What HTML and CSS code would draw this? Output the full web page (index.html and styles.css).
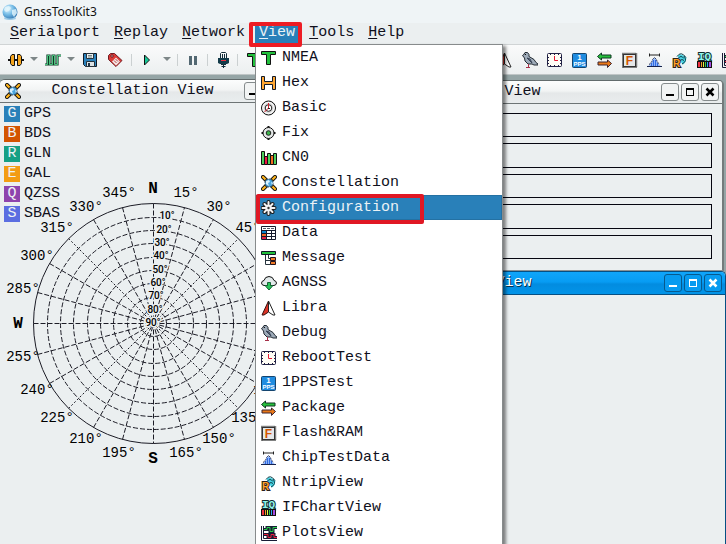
FILE: index.html
```html
<!DOCTYPE html>
<html lang="en">
<head>
<meta charset="utf-8">
<title>GnssToolKit3</title>
<link rel="stylesheet" href="styles.css">
</head>
<body>
<svg class="sprite" aria-hidden="true">
  <defs>
    <radialGradient id="globe-fill" cx=".35" cy=".3" r=".8"><stop offset="0" stop-color="#e9f8ff"/><stop offset=".45" stop-color="#79bfe8"/><stop offset="1" stop-color="#2469a8"/></radialGradient>
  </defs>
  <symbol id="i-nmea" viewBox="0 0 16 16"><path d="M.5 1.5h14v3h-5v10h-4v-10h-5z" fill="#22c03c" stroke="#111"/></symbol>
  <symbol id="i-hex" viewBox="0 0 16 16"><path d="M.5 1.5h3v5h8v-5h3v13h-3v-5h-8v5h-3z" fill="#ffa733" stroke="#111827"/></symbol>
  <symbol id="i-basic" viewBox="0 0 16 16"><circle cx="7.5" cy="8" r="7" fill="#ddd" stroke="#111"/><circle cx="7.5" cy="8" r="5.6" fill="none" stroke="#fff"/><circle cx="7.5" cy="8" r="3.3" fill="#fff" stroke="#222"/><path d="M7.5 3v5l-4 4" fill="none" stroke="#d3202f"/><path d="M7 8h2v1H7z" fill="#222"/></symbol>
  <symbol id="i-fix" viewBox="0 0 16 16"><path d="M7.5 1v14M.5 8h14" stroke="#111" stroke-width="2"/><circle cx="7.5" cy="8" r="5.5" fill="#e5e8e8" stroke="#111"/><circle cx="7.5" cy="8" r="2.3" fill="#3fb64c" stroke="#222"/></symbol>
  <symbol id="i-cn0" viewBox="0 0 16 16"><g stroke="#111"><path d="M.5 1.5h3v13h-3z" fill="#4ccf5c"/><path d="M3.5 6.5h3v8h-3z" fill="#ec1745"/><path d="M6.5 3.5h3v11h-3z" fill="#4ccf5c"/><path d="M9.500 5.500h3v9h-3z" fill="#f36a21"/><path d="M12.500 3.500h3v11h-3z" fill="#4ccf5c"/></g></symbol>
  <symbol id="i-const" viewBox="0 0 16 16"><path d="M2 2l12 12M14 2L2 14" stroke="#111" stroke-width="4" stroke-linecap="round"/><path d="M2 2l12 12M14 2L2 14" stroke="#ffb51c" stroke-width="2.200" stroke-linecap="round"/><path d="M4.500 4.500l7 7M11.500 4.500l-7 7" stroke="#111" stroke-width="2"/><circle cx="8" cy="8" r="4" fill="#48a4df" stroke="#3a4a55" stroke-dasharray="2 1"/><path d="M5 6l3-1 1 2-2 1 1 3-3-2zM10 7l2 1-1 2z" fill="#d8f1ff"/></symbol>
  <symbol id="i-config" viewBox="0 0 16 16"><path d="M7.500 2v12M1.500 8h12M3.500 4l8 8M11.500 4l-8 8" stroke="#1b1b1b" stroke-width="4" stroke-linecap="round"/><circle cx="7.500" cy="8" r="4.500" fill="#1b1b1b"/><path d="M7.500 2v12M1.500 8h12M3.500 4l8 8M11.500 4l-8 8" stroke="#f2f2f2" stroke-width="2" stroke-linecap="round"/><circle cx="7.500" cy="8" r="3.200" fill="#f2f2f2"/><circle cx="7.500" cy="8" r="1.200" fill="#333"/></symbol>
  <symbol id="i-data" viewBox="0 0 16 16"><path d="M.5 1.500h14v13H.5z" fill="#fff" stroke="#151a2c"/><path d="M1 6h4v2H1z" fill="#0788cf"/><path d="M1 9h4v2H1z" fill="#f26a21"/><path d="M1 12h4v2H1z" fill="#e31b43"/><path d="M1 5.500h13M1 8.500h13M1 11.500h13M5.500 5v10M10.500 5v10" stroke="#151a2c" fill="none"/><path d="M2 3.500h11" stroke="#555b68" stroke-dasharray="3 1"/></symbol>
  <symbol id="i-message" viewBox="0 0 16 16"><path d="M.5 1.500h14v3H.5z" fill="#22c03c" stroke="#111827"/><path d="M4.500 5v9.500h5M4.500 10.500h5M7.500 5v3.500h2" fill="none" stroke="#26333c"/><path d="M9.500 7.500h5v3h-5zM9.500 11.500h5v3h-5z" fill="#f07a25" stroke="#26131c"/></symbol>
  <symbol id="i-agnss" viewBox="0 0 16 16"><path d="M3 10.500Q.5 10 .5 8 1 5.500 3 5.500 4 1.500 8 1.500t5 4q2 0 2.500 2.500 0 2-2.500 2.500z" fill="#e2e9ea" stroke="#111"/><path d="M6.500 7.500h3v3h2.500l-4 4.500-4-4.500h2.500z" fill="#26c558" stroke="#176236"/></symbol>
  <symbol id="i-libra" viewBox="0 0 16 16"><path d="M7.500 1l-6.500 14h2l4.500-3z" fill="#db3226" stroke="#35100e"/><path d="M7.500 1l6.500 14h-2l-4.500-3z" fill="#fff" stroke="#222"/></symbol>
  <symbol id="i-debug" viewBox="0 0 16 16"><path d="M3 .5h2.500l1.500 2v2l5 3 2 3 2 1.500v1h-4l-2-1H6l-3-3-.5-3L.5 3.500l1-.5z" fill="#9eabb9" stroke="#222a32"/><path d="M5 6l5 5-2-4z" fill="#62718a" stroke="#394456"/><path d="M3 2h1v1H3z" fill="#111"/><path d="M6.500 12v3M4 15.500h4" stroke="#a63049"/></symbol>
  <symbol id="i-reboot" viewBox="0 0 16 16"><rect x=".5" y="1.500" width="14" height="13" rx="1" fill="#fffdf5" stroke="#202044"/><path d="M7.500 2v1M3.500 2v1M11.500 2v1M3.500 13v1M7.500 13v1M11.500 13v1M1 5.500h1M1 8.500h1M1 11.500h1M13 5.500h1M13 8.500h1M13 11.500h1" stroke="#202044"/><path d="M7.500 4v4.500H11" fill="none" stroke="#e31834"/></symbol>
  <symbol id="i-pps" viewBox="0 0 16 16"><rect x=".5" y="1.500" width="14" height="14" rx="1" fill="#208ce0" stroke="#15456f"/><text x="7.500" y="8" class="tiny-one">1</text><text x="7.500" y="14" class="tiny-pps">PPS</text></symbol>
  <symbol id="i-package" viewBox="0 0 16 16"><path d="M.5 4.500l4-3.500v2h9.500v3H4.500v2z" fill="#26c03c" stroke="#103824"/><path d="M14.500 11.500l-4-3.500v2H1v3h9.500v2.500z" fill="#e97817" stroke="#3d2430"/></symbol>
  <symbol id="i-flash" viewBox="0 0 16 16"><rect x=".5" y="1.500" width="14" height="14" fill="#e4e7e8" stroke="#111" stroke-width="1.500" stroke-dasharray="1 1"/><rect x="1.500" y="2.500" width="12" height="12" fill="#e4e7e8" stroke="#333"/><text x="7.500" y="13" class="tiny-f">F</text></symbol>
  <symbol id="i-chip" viewBox="0 0 16 16"><path d="M2.500 1.500v3M12.500 1.500v3M2.500 3h10" stroke="#222" fill="none"/><path d="M1 14q3-1 4.500-6l2-2 2 2q1.500 5 4.500 6z" fill="#8eb5fa"/><path d="M4.500 11v3M6.500 8v6M8.500 8v6M10.500 11v3" stroke="#326be1"/><path d="M0 14.500h15" stroke="#16224c"/><path d="M2 12.500q3-2 3.500-5l2-2 2 2q.5 3 3.500 5" fill="none" stroke="#16224c" stroke-dasharray="2 1"/></symbol>
  <symbol id="i-ntrip" viewBox="0 0 16 16"><path d="M5.500 4q3-4 9 2-1 6-4 6.500z" fill="#48d4e4"/><path d="M5 4.500q4-6 9 1M6 6.500q3-4 6 0M8 8.500q2-2 4 0M12 4q4 5-2 8" fill="none" stroke="#10434d"/><text x="4.500" y="15" class="tiny-r">R</text></symbol>
  <symbol id="i-if" viewBox="0 0 16 16"><text x="7.500" y="7.500" class="tiny-iq">IQ</text><path d="M0 9h15v7H0z" fill="#111"/><path d="M1 10h2v5H1z" fill="#ef3140"/><path d="M4 10h1v5H4z" fill="#f79a25"/><path d="M6 10h1v5H6z" fill="#e8f13c"/><path d="M8 10h1v5H8z" fill="#2ecb4d"/><path d="M10 10h1v5h-1z" fill="#29a7f3"/><path d="M12 10h2v5h-2z" fill="#a44be0"/></symbol>
  <symbol id="i-plots" viewBox="0 0 16 16"><path d="M.5 1v14.500H16" fill="none" stroke="#171c35"/><path d="M2.500 1v12.500H16" fill="none" stroke="#171c35"/><path d="M3 4.500h3v-2h3v4h3v-4h4" fill="none" stroke="#171c35" stroke-width="3"/><path d="M3 4.500h3v-2h3v4h3v-4h4" fill="none" stroke="#29ce4a"/><path d="M3 9.500h4v3h3v-3h3v3h3" fill="none" stroke="#171c35" stroke-width="3"/><path d="M3 9.500h4v3h3v-3h3v3h3" fill="none" stroke="#ed1f3c"/></symbol>
  <symbol id="i-connect" viewBox="0 0 16 16"><path d="M0 8h16" stroke="#111" stroke-width="2"/><path d="M6.500 2.500H4l-1.500 2v7l1.500 2h2.500zM9.500 2.500H12l1.500 2v7l-1.500 2H9.500z" fill="#f5a51d" stroke="#111"/></symbol>
  <symbol id="i-wave" viewBox="0 0 16 16"><path d="M0 12.500h2.500V3.500h2v9h3V3.500h2v9h3V3.500H16" fill="none" stroke="#0b3b25" stroke-width="2.200"/><path d="M0 12.500h2.500V3.500h2v9h3V3.500h2v9h3V3.500H16" fill="none" stroke="#4cc480"/></symbol>
  <symbol id="i-save" viewBox="0 0 16 16"><path d="M1.500 1.500h13v13h-11l-2-2z" fill="#2a82bd" stroke="#111a26"/><path d="M4.500 1.500h7v5h-7z" fill="#edf1f2" stroke="#26333c"/><path d="M6 3.500h4M6 5h4" stroke="#788"/><path d="M4.500 9.500h8v5h-8z" fill="#dce3e6" stroke="#26333c"/><path d="M6 11h2v3H6z" fill="#234"/></symbol>
  <symbol id="i-tag" viewBox="0 0 16 16"><path d="M1.500 3.500l2-2h4l7.500 7-6 6-7.500-7z" fill="#db3a36" stroke="#701c23"/><path d="M4 3h2v2H4z" fill="#fff" stroke="#701c23"/><path d="M9 5.500l4 4-4 4-4-4z" fill="#f4e9e7"/><path d="M8.500 7l2.500 2.500M7 8.500l2.500 2.500" stroke="#b74146"/></symbol>
  <symbol id="i-play" viewBox="0 0 16 16"><path d="M3.500 3l5 5-5 5z" fill="#17c796" stroke="#111"/></symbol>
  <symbol id="i-pause" viewBox="0 0 16 16"><path d="M4 4h3v9H4zM9 4h3v9H9z" fill="#536872"/></symbol>
  <symbol id="i-plug" viewBox="0 0 16 16"><path d="M5.500 6V1.500l1-1h4l1 1V6M7.500 2v4M9.500 2v4" fill="none" stroke="#122b38"/><path d="M3 6h11v5l-2 1H5l-2-1z" fill="#123a49"/><path d="M6 8.500h5" stroke="#ed3040"/><path d="M6 12.500h5M8.500 12v4M6.500 14.500h4" stroke="#122b38"/></symbol>
  <symbol id="i-caret" viewBox="0 0 8 5"><path d="M0 0h8L4 4z" fill="#7e8788"/></symbol>
  <symbol id="i-min" viewBox="0 0 10 10"><path d="M1 7h8v2H1z" fill="currentColor"/></symbol>
  <symbol id="i-max" viewBox="0 0 10 10"><path d="M1 1h8v8H1zM2 3v5h6V3z" fill="currentColor" fill-rule="evenodd"/></symbol>
  <symbol id="i-close" viewBox="0 0 10 10"><path d="M1.500 1.500l7 7M8.500 1.500l-7 7" stroke="currentColor" stroke-width="2.500"/></symbol>
</svg>

<div class="app">
  <header class="titlebar">
    <svg class="icon" viewBox="0 0 16 16"><circle cx="8" cy="8" r="7.500" fill="url(#globe-fill)"/><path d="M3 3l4-1 2 2-2 3-3 1-2-2zM10 6l4-1 1 4-3 4-2-3z" fill="#e4f6fd" opacity=".8"/><path d="M3 13q5 3 10 0l1 2q-6 2-12 0z" fill="#9dcbe7"/></svg>
    <span>GnssToolKit3</span>
  </header>

  <nav class="menubar">
    <button class="menu-title"><u>S</u>erialport</button>
    <button class="menu-title"><u>R</u>eplay</button>
    <button class="menu-title"><u>N</u>etwork</button>
    <div class="menu-host">
      <button class="menu-title active"><u>V</u>iew</button>
      <div class="popup">
        <button class="entry"><svg class="icon"><use href="#i-nmea"/></svg>NMEA</button>
        <button class="entry"><svg class="icon"><use href="#i-hex"/></svg>Hex</button>
        <button class="entry"><svg class="icon"><use href="#i-basic"/></svg>Basic</button>
        <button class="entry"><svg class="icon"><use href="#i-fix"/></svg>Fix</button>
        <button class="entry"><svg class="icon"><use href="#i-cn0"/></svg>CN0</button>
        <button class="entry"><svg class="icon"><use href="#i-const"/></svg>Constellation</button>
        <button class="entry selected"><svg class="icon"><use href="#i-config"/></svg>Configuration<span class="mark mark-entry"></span></button>
        <button class="entry"><svg class="icon"><use href="#i-data"/></svg>Data</button>
        <button class="entry"><svg class="icon"><use href="#i-message"/></svg>Message</button>
        <button class="entry"><svg class="icon"><use href="#i-agnss"/></svg>AGNSS</button>
        <button class="entry"><svg class="icon"><use href="#i-libra"/></svg>Libra</button>
        <button class="entry"><svg class="icon"><use href="#i-debug"/></svg>Debug</button>
        <button class="entry"><svg class="icon"><use href="#i-reboot"/></svg>RebootTest</button>
        <button class="entry"><svg class="icon"><use href="#i-pps"/></svg>1PPSTest</button>
        <button class="entry"><svg class="icon"><use href="#i-package"/></svg>Package</button>
        <button class="entry"><svg class="icon"><use href="#i-flash"/></svg>Flash&amp;RAM</button>
        <button class="entry"><svg class="icon"><use href="#i-chip"/></svg>ChipTestData</button>
        <button class="entry"><svg class="icon"><use href="#i-ntrip"/></svg>NtripView</button>
        <button class="entry"><svg class="icon"><use href="#i-if"/></svg>IFChartView</button>
        <button class="entry"><svg class="icon"><use href="#i-plots"/></svg>PlotsView</button>
      </div>
      <span class="mark mark-title"></span>
    </div>
    <button class="menu-title"><u>T</u>ools</button>
    <button class="menu-title"><u>H</u>elp</button>
  </nav>

  <div class="toolbar">
    <button class="tool" aria-label="Connect"><svg class="icon"><use href="#i-connect"/></svg></button>
    <button class="drop" aria-label="Connect options"><svg class="caret"><use href="#i-caret"/></svg></button>
    <button class="tool" aria-label="Baud rate"><svg class="icon"><use href="#i-wave"/></svg></button>
    <button class="drop" aria-label="Baud rate options"><svg class="caret"><use href="#i-caret"/></svg></button>
    <button class="tool" aria-label="Save"><svg class="icon"><use href="#i-save"/></svg></button>
    <button class="tool" aria-label="Clear"><svg class="icon"><use href="#i-tag"/></svg></button>
    <span class="sep"></span>
    <button class="tool" aria-label="Play"><svg class="icon"><use href="#i-play"/></svg></button>
    <button class="drop" aria-label="Play options"><svg class="caret"><use href="#i-caret"/></svg></button>
    <span class="sep"></span>
    <button class="tool narrow" aria-label="Pause"><svg class="icon"><use href="#i-pause"/></svg></button>
    <span class="sep"></span>
    <button class="tool narrow" aria-label="Network"><svg class="icon"><use href="#i-plug"/></svg></button>
    <span class="sep"></span>
    <button class="tool" aria-label="NMEA"><svg class="icon"><use href="#i-nmea"/></svg></button>
    <button class="tool" aria-label="Hex"><svg class="icon"><use href="#i-hex"/></svg></button>
    <button class="tool" aria-label="Basic"><svg class="icon"><use href="#i-basic"/></svg></button>
    <button class="tool" aria-label="Fix"><svg class="icon"><use href="#i-fix"/></svg></button>
    <button class="tool" aria-label="CN0"><svg class="icon"><use href="#i-cn0"/></svg></button>
    <button class="tool" aria-label="Constellation"><svg class="icon"><use href="#i-const"/></svg></button>
    <button class="tool" aria-label="Configuration"><svg class="icon"><use href="#i-config"/></svg></button>
    <button class="tool" aria-label="Data"><svg class="icon"><use href="#i-data"/></svg></button>
    <button class="tool" aria-label="Message"><svg class="icon"><use href="#i-message"/></svg></button>
    <button class="tool" aria-label="AGNSS"><svg class="icon"><use href="#i-agnss"/></svg></button>
    <button class="tool" aria-label="Libra"><svg class="icon"><use href="#i-libra"/></svg></button>
    <button class="tool" aria-label="Debug"><svg class="icon"><use href="#i-debug"/></svg></button>
    <button class="tool" aria-label="RebootTest"><svg class="icon"><use href="#i-reboot"/></svg></button>
    <button class="tool" aria-label="1PPSTest"><svg class="icon"><use href="#i-pps"/></svg></button>
    <button class="tool" aria-label="Package"><svg class="icon"><use href="#i-package"/></svg></button>
    <button class="tool" aria-label="Flash and RAM"><svg class="icon"><use href="#i-flash"/></svg></button>
    <button class="tool" aria-label="ChipTestData"><svg class="icon"><use href="#i-chip"/></svg></button>
    <button class="tool" aria-label="NtripView"><svg class="icon"><use href="#i-ntrip"/></svg></button>
    <button class="tool" aria-label="IFChartView"><svg class="icon"><use href="#i-if"/></svg></button>
    <button class="tool" aria-label="PlotsView"><svg class="icon"><use href="#i-plots"/></svg></button>
  </div>

  <main class="workspace">
    <section class="window sky">
      <div class="caption">
        <svg class="icon"><use href="#i-const"/></svg>
        <h2>Constellation View</h2>
        <button class="ctl" aria-label="Minimize"><svg><use href="#i-min"/></svg></button>
        <button class="ctl" aria-label="Maximize"><svg><use href="#i-max"/></svg></button>
        <button class="ctl" aria-label="Close"><svg><use href="#i-close"/></svg></button>
      </div>
      <div class="sky-body">
        <ul class="legend">
          <li><span class="chip gps">G</span>GPS</li>
          <li><span class="chip bds">B</span>BDS</li>
          <li><span class="chip gln">R</span>GLN</li>
          <li><span class="chip gal">E</span>GAL</li>
          <li><span class="chip qzss">Q</span>QZSS</li>
          <li><span class="chip sbas">S</span>SBAS</li>
        </ul>
        <svg class="plot" viewBox="0 175 306 295">
          <g transform="translate(.5 .5)">
            <g class="spokes">
              <path d="M153 203v240M33 323h240"/>
              <path d="M122 207l62 232M93 219l120 208M49 263l208 120M37 292l232 62M37 354l232-62M49 383l208-120M93 427l120-208M122 439l62-232"/>
              <path class="dots" d="M68 238l170 170M68 408l170-170"/>
            </g>
            <circle class="rim" cx="153" cy="323" r="120"/>
            <g class="rings">
              <circle cx="153" cy="323" r="106"/><circle cx="153" cy="323" r="93"/><circle cx="153" cy="323" r="80"/><circle cx="153" cy="323" r="66"/><circle cx="153" cy="323" r="53"/><circle cx="153" cy="323" r="40"/><circle cx="153" cy="323" r="26"/><circle cx="153" cy="323" r="13"/>
            </g>
          </g>
          <g class="azimuth">
            <text x="186" y="197">15°</text><text x="219" y="211">30°</text><text x="248" y="232">45°</text><text x="270" y="260">60°</text><text x="284" y="292">75°</text>
            <text x="284" y="361">105°</text><text x="270" y="394">120°</text><text x="248" y="422">135°</text><text x="219" y="443">150°</text><text x="186" y="457">165°</text>
            <text x="119" y="457">195°</text><text x="86" y="443">210°</text><text x="57" y="422">225°</text><text x="37" y="394">240°</text><text x="23" y="361">255°</text>
            <text x="23" y="293">285°</text><text x="37" y="260">300°</text><text x="57" y="232">315°</text><text x="86" y="211">330°</text><text x="119" y="197">345°</text>
          </g>
          <g class="compass"><text x="153" y="193">N</text><text x="153" y="463">S</text><text x="18" y="328">W</text><text x="288" y="328">E</text></g>
          <g class="elevation">
            <text x="167" y="219">10°</text><text x="164" y="233">20°</text><text x="162" y="246">30°</text><text x="161" y="259">40°</text><text x="160" y="273">50°</text><text x="158" y="286">60°</text><text x="156" y="299">70°</text><text x="155" y="313">80°</text><text x="153" y="326">90°</text>
          </g>
        </svg>
      </div>
    </section>

    <div class="column">
      <section class="window signal">
        <div class="caption">
          <svg class="icon"><use href="#i-cn0"/></svg>
          <h2>CN0 View</h2>
          <button class="ctl" aria-label="Minimize"><svg><use href="#i-min"/></svg></button>
          <button class="ctl" aria-label="Maximize"><svg><use href="#i-max"/></svg></button>
          <button class="ctl" aria-label="Close"><svg><use href="#i-close"/></svg></button>
        </div>
        <div class="bands"><div></div><div></div><div></div><div></div><div></div></div>
      </section>
      <section class="window focused">
        <div class="caption">
          <svg class="icon"><use href="#i-data"/></svg>
          <h2>Data View</h2>
          <button class="ctl" aria-label="Minimize"><svg><use href="#i-min"/></svg></button>
          <button class="ctl" aria-label="Maximize"><svg><use href="#i-max"/></svg></button>
          <button class="ctl" aria-label="Close"><svg><use href="#i-close"/></svg></button>
        </div>
      </section>
    </div>
  </main>
</div>
</body>
</html>
```
FILE: styles.css
```css
* { box-sizing: border-box; }

body {
  margin: 0;
  background: #ebeff0;
  color: #10101c;
  font: 15px/20px "Courier New", "Liberation Mono", monospace;
}

button {
  margin: 0;
  padding: 0;
  border: 0;
  background: none;
  color: inherit;
  font: inherit;
}

.sprite { position: absolute; width: 0; height: 0; }
.icon { flex: none; width: 16px; height: 16px; }

.app {
  display: flex;
  flex-direction: column;
  height: 100vh;
  overflow: hidden;
}

.titlebar {
  display: flex;
  align-items: center;
  gap: 6px;
  height: 23px;
  padding: 0 2px;
  background: #eff4f6;
  color: #111;
  font: 12px/16px "Segoe UI", "Noto Sans", sans-serif;
}

/* Menu bar and its drop-down */
.menubar {
  display: flex;
  height: 22px;
  padding-left: 3px;
  border-bottom: 1px solid #d0d4d5;
}
.menu-title {
  height: 21px;
  margin: 0 3px;
  padding: 0 4px 2px;
  line-height: 18px;
}
.menu-title u { text-underline-offset: 2px; }
.menu-host { position: relative; display: flex; }
.menu-title.active { background: #2980b9; color: #ebf2f5; }

.popup {
  position: absolute;
  z-index: 2;
  top: 21px;
  left: 3px;
  width: 248px;
  border: 1px solid #878b8c;
  background: #fff;
  box-shadow: 3px 2px 3px #0007;
}
.entry {
  position: relative;
  display: flex;
  align-items: center;
  gap: 5px;
  width: 100%;
  height: 25px;
  padding: 0 5px;
}
.entry.selected { background: #2980b9; color: #ebf2f5; outline: 1px solid #2471a3; outline-offset: -1px; }

.mark { position: absolute; z-index: 3; border: 4px solid #ed1c24; border-radius: 2px; }
.mark-title { inset: -1px 0 -3px -3px; }
.mark-entry { inset: -1px 78px -4px 0; border-color: #e01824; }

/* Tool bar */
.toolbar {
  display: flex;
  align-items: center;
  height: 30px;
  padding-left: 3px;
  overflow: hidden;
  border-bottom: 1px solid #bfc5c6;
  background: linear-gradient(#fafbfb, #eceff0);
}
.tool, .drop {
  display: flex;
  flex: none;
  align-items: center;
  justify-content: center;
  width: 25px;
  height: 26px;
}
.tool.narrow { width: 21px; }
.drop { width: 12px; }
.caret { width: 8px; height: 5px; }
.sep { flex: none; width: 2px; height: 12px; margin: 0 3px 0 4px; border-left: 1px solid #cbd0d1; }

.tiny-one, .tiny-pps, .tiny-f, .tiny-r, .tiny-iq { font-family: "Liberation Sans", sans-serif; font-weight: bold; text-anchor: middle; }
.tiny-one { font-size: 8px; fill: #fff; }
.tiny-pps { font-size: 6px; fill: #fff; }
.tiny-f { font-size: 12px; fill: #d35400; }
.tiny-r { font-size: 10px; fill: #ffa226; stroke: #29201a; stroke-width: 2px; paint-order: stroke; }
.tiny-iq { font-family: "Liberation Mono", monospace; font-size: 11px; fill: #8ff6ee; stroke: #102a2b; stroke-width: 2px; paint-order: stroke; }

/* Document windows */
.workspace {
  display: grid;
  flex: 1;
  grid-template-columns: 306px 1fr;
  min-height: 0;
  padding-top: 4px;
  background: #95a5a6;
}
.column { display: flex; flex-direction: column; }
.window {
  overflow: hidden;
  border: 1px solid #626b6c;
  border-radius: 5px 5px 0 0;
  background: #ebeff0;
}
.sky { border-left: 0; border-bottom: 0; }
.signal { margin: 1px 2px 0 0; border-right: 2px solid #747b7c; border-bottom-color: #8c9192; }
.caption {
  display: flex;
  align-items: center;
  gap: 2px;
  height: 23px;
  padding: 0 3px 0 5px;
  border-bottom: 1px solid #6d7475;
  background: linear-gradient(#fcfdfd, #f2f4f4 45%, #e5e8e9 55%, #e9edee);
}
.caption h2 {
  flex: 1;
  margin: 0;
  font: inherit;
  text-align: center;
}
.signal h2 { padding-left: 20px; }
.ctl {
  display: grid;
  place-items: center;
  width: 18px;
  height: 18px;
  border: 1px solid #858b8c;
  border-radius: 3px;
  background: #f2f4f4;
  color: #000;
}
.ctl svg { width: 10px; height: 10px; }

.focused { flex: 1; border-color: #064f83; border-bottom: 0; }
.focused .caption {
  border-color: #064f83;
  background: linear-gradient(#10a5fa, #079cf3 45%, #028ce0 55%, #0294e8);
  color: #fff;
}
.focused h2 { padding-right: 10px; text-shadow: 1px 1px #04324f; }
.focused .ctl { border-color: #07598d; background: #079bf0; color: #fff; }

.bands {
  display: grid;
  grid-auto-rows: 1fr;
  gap: 6px;
  height: 166px;
  padding: 9px 10px 11px;
}
.bands div { border: 1px solid #050510; }

/* Sky plot */
.sky-body { display: grid; align-content: start; }
.legend, .plot { grid-area: 1 / 1; }
.legend { margin: 0; padding: 1px 4px 0; list-style: none; }
.legend li { display: flex; align-items: center; gap: 4px; height: 20px; }
.chip { width: 16px; height: 16px; color: #eef2f4; line-height: 16px; text-align: center; }
.gps { background: #2980b9; }
.bds { background: #d35400; }
.gln { background: #16a085; }
.gal { background: #f39c12; }
.qzss { background: #8e44ad; }
.sbas { background: #5b6ee1; }

.plot { width: 306px; height: 295px; margin-top: 72px; }
.spokes path, .rings circle, .rim { fill: none; stroke: #1c1c26; stroke-width: 1px; }
.spokes path, .rings circle { stroke-dasharray: 5 2; }
.spokes .dots { stroke-dasharray: 2 2; }
.azimuth text { font-size: 14px; text-anchor: middle; }
.compass text { font-size: 16px; font-weight: bold; text-anchor: middle; }
.elevation text {
  font: 500 10px Roboto, "Liberation Sans", sans-serif;
  text-anchor: middle;
  fill: #000;
  stroke: #ebeff0;
  stroke-width: 3px;
  paint-order: stroke;
}
```
